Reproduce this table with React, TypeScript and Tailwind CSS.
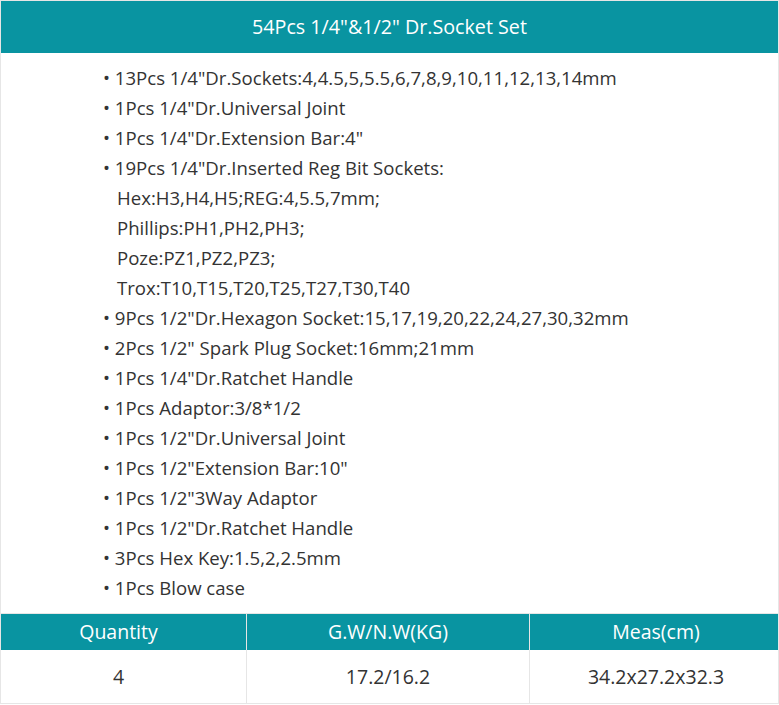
const items: string[][] = [
  ['13Pcs 1/4"Dr.Sockets:4,4.5,5,5.5,6,7,8,9,10,11,12,13,14mm'],
  ['1Pcs 1/4"Dr.Universal Joint'],
  ['1Pcs 1/4"Dr.Extension Bar:4"'],
  [
    '19Pcs 1/4"Dr.Inserted Reg Bit Sockets:',
    'Hex:H3,H4,H5;REG:4,5.5,7mm;',
    'Phillips:PH1,PH2,PH3;',
    'Poze:PZ1,PZ2,PZ3;',
    'Trox:T10,T15,T20,T25,T27,T30,T40',
  ],
  ['9Pcs 1/2"Dr.Hexagon Socket:15,17,19,20,22,24,27,30,32mm'],
  ['2Pcs 1/2" Spark Plug Socket:16mm;21mm'],
  ['1Pcs 1/4"Dr.Ratchet Handle'],
  ['1Pcs Adaptor:3/8*1/2'],
  ['1Pcs 1/2"Dr.Universal Joint'],
  ['1Pcs 1/2"Extension Bar:10"'],
  ['1Pcs 1/2"3Way Adaptor'],
  ['1Pcs 1/2"Dr.Ratchet Handle'],
  ['3Pcs Hex Key:1.5,2,2.5mm'],
  ['1Pcs Blow case'],
];

export default function App() {
  return (
    <div className="w-[779px] h-[705px] bg-white font-['Open_Sans',sans-serif] text-[#333333]">
      <div className="border border-[#e6e6e6]">
        {/* Title */}
        <div className="h-[52px] bg-[#0994a1] text-white text-[19.7px] font-medium flex items-center justify-center">
          54Pcs 1/4"&amp;1/2" Dr.Socket Set
        </div>

        {/* Contents */}
        <div className="pl-[102px] pt-[10px] pb-[10px] text-[18.6px] leading-[30px] border-b border-[#e6e6e6]">
          {items.map((lines, i) => (
            <div key={i}>
              <div>• {lines[0]}</div>
              {lines.slice(1).map((l, j) => (
                <div key={j} className="pl-[14px]">{l}</div>
              ))}
            </div>
          ))}
        </div>

        {/* Spec table */}
        <div className="grid grid-cols-[246px_283px_1fr] text-[19.5px]">
          <div className="h-[36px] pr-[10px] bg-[#0994a1] text-white flex items-center justify-center border-r border-[#e6e6e6]">Quantity</div>
          <div className="h-[36px] bg-[#0994a1] text-white flex items-center justify-center border-r border-[#e6e6e6]">G.W/N.W(KG)</div>
          <div className="h-[36px] pl-[4px] bg-[#0994a1] text-white flex items-center justify-center">Meas(cm)</div>
          <div className="h-[53px] pr-[10px] flex items-center justify-center border-r border-[#e6e6e6]">4</div>
          <div className="h-[53px] flex items-center justify-center border-r border-[#e6e6e6]">17.2/16.2</div>
          <div className="h-[53px] pl-[4px] flex items-center justify-center">34.2x27.2x32.3</div>
        </div>
      </div>
    </div>
  );
}
